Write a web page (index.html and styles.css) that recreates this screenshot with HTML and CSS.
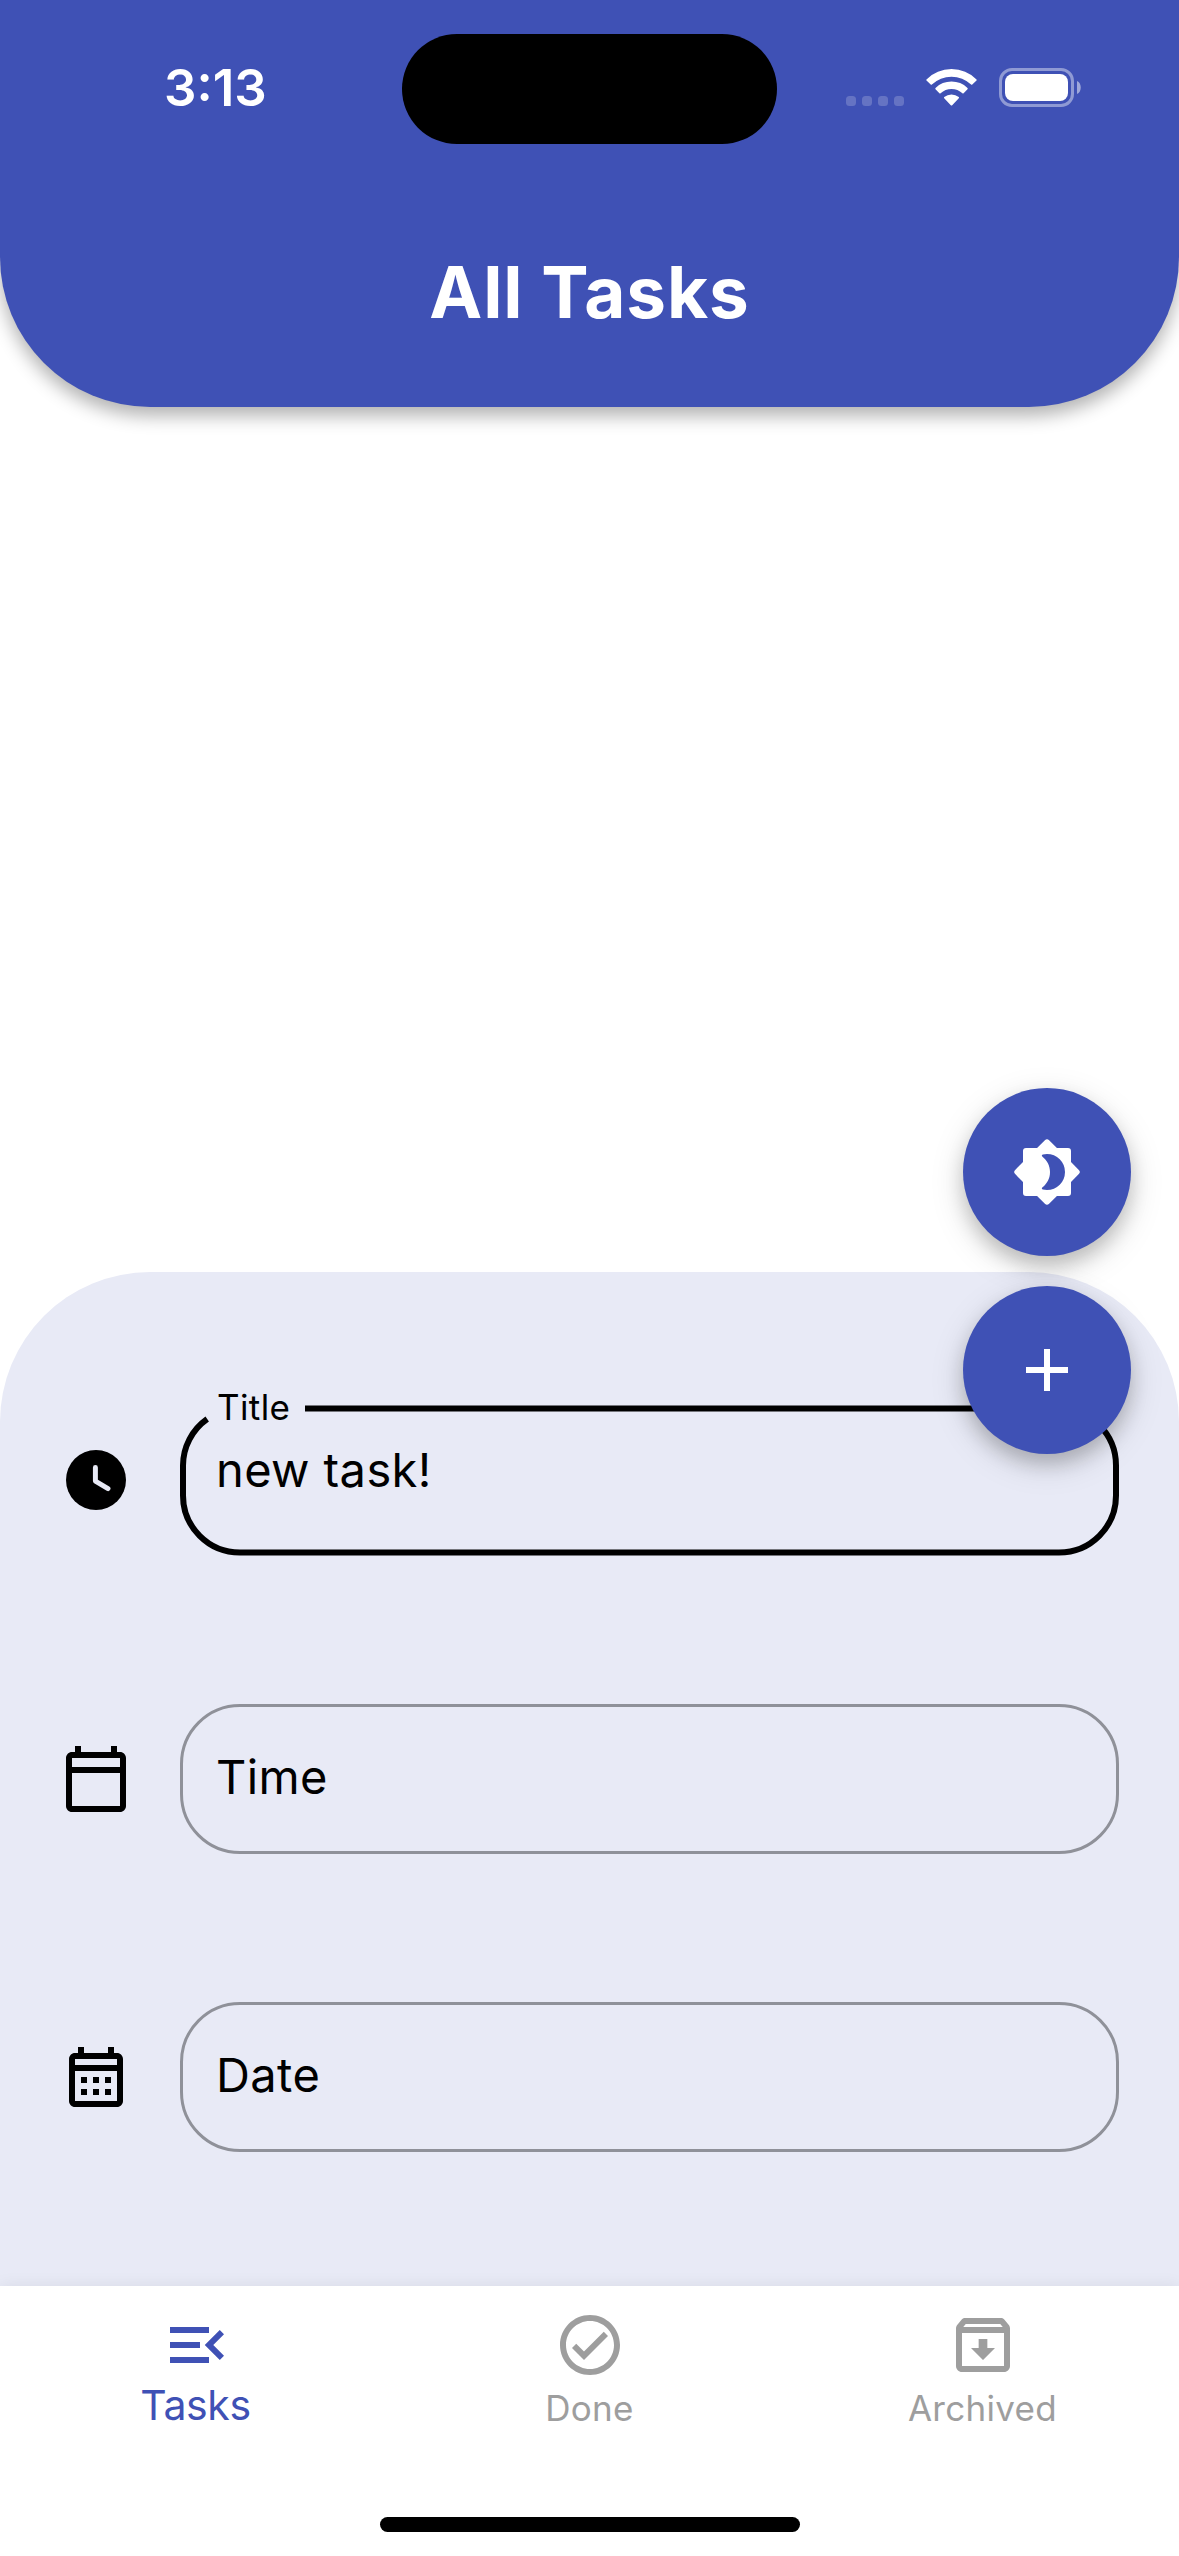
FILE: index.html
```html
<!DOCTYPE html>
<html lang="en">
<head>
<meta charset="utf-8">
<title>All Tasks</title>
<link rel="stylesheet" href="styles.css">
</head>
<body>
<div class="screen">
  <header class="app-header">
    <div class="status-bar">
      <span class="clock">3:13</span>
      <div class="island"></div>
      <div class="status-icons">
        <div class="signal"><i></i><i></i><i></i><i></i></div>
        <svg class="wifi" viewBox="0 0 51 37" fill="#fff">
          <path d="M25.500 0.000A36 36 0 0 1 50.500 10.400Q51 11 50.500 11.600L46.300 15.500Q45.700 16 45.100 15.500A28.400 28.400 0 0 0 5.900 15.500Q5.300 16 4.700 15.500L0.500 11.600Q0 11 0.500 10.400A36 36 0 0 1 25.500 0Z"/>
          <path d="M25.500 12.600A23.400 23.400 0 0 1 41.500 19Q42 19.600 41.500 20.200L37.600 24.200Q37 24.800 36.400 24.300A16 16 0 0 0 14.600 24.300Q14 24.800 13.400 24.200L9.500 20.200Q9 19.600 9.500 19A23.400 23.400 0 0 1 25.500 12.600Z"/>
          <path d="M25.500 25.400A11.500 11.500 0 0 1 32.800 28Q33.300 28.600 32.800 29.200L26.200 36.200Q25.500 36.900 24.800 36.200L18.200 29.200Q17.700 28.600 18.200 28A11.500 11.500 0 0 1 25.500 25.400Z"/>
        </svg>
        <svg class="battery" viewBox="0 0 83 39">
          <rect x="1.500" y="1.500" width="72" height="36" rx="11.500" fill="none" stroke="#fff" stroke-opacity=".42" stroke-width="3"/>
          <rect x="6" y="6" width="63" height="27" rx="8" fill="#fff"/>
          <path d="M78 13C83 15 83 24 78 26Z" fill="#fff" fill-opacity=".5"/>
        </svg>
      </div>
    </div>
    <h1 class="title">All Tasks</h1>
  </header>

  <main class="task-list"></main>

  <form class="sheet">
    <label class="row">
      <svg class="icon" viewBox="0 0 24 24"><circle cx="12" cy="12" r="10"/><path d="M11.800 7.850V12.350L16 14.850" fill="none" stroke="#e8eaf6" stroke-width="1.650" stroke-linecap="round" stroke-linejoin="round"/></svg>
      <span class="field active">
        <svg class="outline" viewBox="0 0 939 151"><path d="M125 3.500H879A57 57 0 0 1 936 60.500V90.500A57 57 0 0 1 879 147.500H60A57 57 0 0 1 3 90.500V60.500A57 57 0 0 1 27.200 14"/></svg>
        <span class="caption">Title</span>
        <span class="value">new task!</span>
      </span>
    </label>
    <label class="row">
      <svg class="icon" viewBox="0 0 24 24"><path d="M20 3h-1V1h-2v2H7V1H5v2H4c-1.100 0-2 .9-2 2v16c0 1.100.9 2 2 2h16c1.100 0 2-.9 2-2V5c0-1.100-.9-2-2-2zm0 18H4V10h16v11zm0-13H4V5h16v3z"/></svg>
      <span class="field"><span class="value">Time</span></span>
    </label>
    <label class="row">
      <svg class="icon" viewBox="0 0 24 24"><path d="M19 4h-1V2h-2v2H8V2H6v2H5c-1.110 0-1.990.9-1.990 2L3 20c0 1.100.89 2 2 2h14c1.100 0 2-.9 2-2V6c0-1.100-.9-2-2-2zm0 16H5V10h14v10zm0-12H5V6h14v2zM9 14H7v-2h2v2zm4 0h-2v-2h2v2zm4 0h-2v-2h2v2zm-8 4H7v-2h2v2zm4 0h-2v-2h2v2zm4 0h-2v-2h2v2z"/></svg>
      <span class="field"><span class="value">Date</span></span>
    </label>
  </form>

  <nav class="tabs">
    <div class="tab selected">
      <svg class="icon" viewBox="0 0 24 24"><path d="M3 18h13v-2H3v2zm0-5h10v-2H3v2zm0-7v2h13V6H3zm18 9.590L17.420 12 21 8.410 19.590 7l-5 5 5 5L21 15.590z"/></svg>
      <span>Tasks</span>
    </div>
    <div class="tab">
      <svg class="icon" viewBox="0 0 24 24"><path d="M16.590 7.580L10 14.170l-2.590-2.580L6 13l4 4 8-8zM12 2C6.480 2 2 6.480 2 12s4.480 10 10 10 10-4.480 10-10S17.520 2 12 2zm0 18c-4.420 0-8-3.580-8-8s3.580-8 8-8 8 3.580 8 8-3.580 8-8 8z"/></svg>
      <span>Done</span>
    </div>
    <div class="tab">
      <svg class="icon" viewBox="0 0 24 24"><path d="M20.540 5.230l-1.390-1.680C18.880 3.210 18.470 3 18 3H6c-.47 0-.88.21-1.160.55L3.460 5.230C3.170 5.570 3 6.020 3 6.500V19c0 1.100.9 2 2 2h14c1.100 0 2-.9 2-2V6.500c0-.48-.17-.93-.46-1.270zM6.240 5h11.520l.83 1H5.420l.82-1zM5 19V8h14v11H5zM10.550 10h2.900v3H16l-4 4-4-4h2.550z"/></svg>
      <span>Archived</span>
    </div>
    <div class="home-indicator"></div>
  </nav>

  <div class="fabs">
    <div class="fab">
      <svg class="icon" viewBox="0 0 24 24"><path fill-rule="evenodd" d="M20 8.690V5Q20 4 19 4H15.310L12.700 1.400Q12 .7 11.300 1.400L8.690 4H5Q4 4 4 5V8.690L1.400 11.300Q.7 12 1.400 12.700L4 15.310V19Q4 20 5 20H8.690L11.300 22.600Q12 23.300 12.700 22.600L15.310 20H19Q20 20 20 19V15.310L22.600 12.700Q23.300 12 22.600 11.300ZM12 18Q11.300 18 10.600 17.850Q10 17.600 10.500 17.100C12 15.900 13 14.200 13 12S12 8.100 10.500 6.900Q10 6.400 10.600 6.150Q11.300 6 12 6A6 6 0 0 1 12 18Z"/></svg>
    </div>
    <div class="fab">
      <svg class="icon" viewBox="0 0 24 24"><path d="M19 13h-6v6h-2v-6H5v-2h6V5h2v6h6v2z"/></svg>
    </div>
  </div>
</div>
</body>
</html>
```
FILE: styles.css
```css
* { box-sizing: border-box; }

body {
  margin: 0;
  background: #fff;
  color: #000;
  font-family: Inter, "Liberation Sans", sans-serif;
}

.screen {
  position: relative;
  display: flex;
  flex-direction: column;
  width: 1179px;
  height: 2556px;
  overflow: hidden;
}

.icon {
  display: block;
  flex: none;
  width: 72px;
  height: 72px;
  fill: currentColor;
}

/* Header */
.app-header {
  flex: none;
  height: 407px;
  padding-top: 34px;
  border-radius: 0 0 150px 150px;
  background: #3f51b5;
  box-shadow: 0 9px 18px rgba(0, 0, 0, .3);
  color: #fff;
}

.status-bar {
  display: grid;
  grid-template-columns: 402px 375px 1fr;
  height: 110px;
}

.clock {
  padding-left: 164px;
  font-size: 51px;
  font-weight: 600;
  line-height: 108px;
}

.island {
  border-radius: 55px;
  background: #000;
}

.status-icons {
  display: flex;
  align-items: flex-start;
  padding: 34px 0 0 69px;
}

.signal {
  display: flex;
  gap: 6px;
  margin-top: 28px;
}

.signal i {
  width: 10px;
  height: 10px;
  border-radius: 3.5px;
  background: rgba(255, 255, 255, .2);
}

.wifi {
  width: 51px;
  height: 37px;
  margin: 1px 0 0 22px;
}

.battery {
  width: 83px;
  height: 39px;
  margin-left: 22px;
}

.title {
  margin: 97px 0 0;
  font-size: 71px;
  font-weight: 700;
  line-height: 102px;
  letter-spacing: .9px;
  text-align: center;
}

.task-list { flex: 1; }

/* Bottom sheet */
.sheet {
  display: flex;
  flex: none;
  flex-direction: column;
  gap: 148px;
  height: 1014.5px;
  padding: 133.5px 60px 0;
  border-radius: 150px 150px 0 0;
  background: #e8eaf6;
}

.row {
  display: flex;
  align-items: center;
  gap: 48px;
  height: 150.5px;
}

.field {
  position: relative;
  flex: 1;
  height: 150px;
  padding-left: 33px;
  border: 3px solid #8f9199;
  border-radius: 60px;
  font-size: 47px;
  line-height: 140px;
  letter-spacing: .4px;
}

.field.active {
  height: 151px;
  padding-left: 36px;
  border: 0;
}

.active .value {
  display: block;
  line-height: 130px;
}

.outline {
  position: absolute;
  inset: 0;
  width: 939px;
  height: 151px;
  fill: none;
  stroke: #000;
  stroke-width: 6px;
}

.caption {
  position: absolute;
  top: -18px;
  left: 37px;
  font-size: 35px;
  line-height: 40px;
}

/* Tab bar */
.tabs {
  position: relative;
  display: grid;
  grid-template-columns: 393px 393px 393px;
  flex: none;
  height: 270px;
  padding-top: 23px;
  background: #fff;
  box-shadow: 0 0 16px rgba(0, 0, 0, .07);
  color: #9e9e9e;
}

.tab {
  display: flex;
  flex-direction: column;
  align-items: center;
  font-size: 35px;
  line-height: 56px;
  letter-spacing: .3px;
}

.tab span { margin-top: -1px; }

.selected {
  color: #3f51b5;
  font-size: 41px;
  letter-spacing: -.4px;
}

.selected span { margin: -4px 2px 0 0; }

.home-indicator {
  position: absolute;
  bottom: 24px;
  left: 380px;
  width: 420px;
  height: 15px;
  border-radius: 8px;
  background: #000;
}

/* Floating buttons */
.fabs {
  position: absolute;
  top: 1088px;
  right: 48px;
  display: flex;
  flex-direction: column;
  gap: 30px;
}

.fab {
  display: flex;
  align-items: center;
  justify-content: center;
  width: 168px;
  height: 168px;
  border-radius: 50%;
  background: #3f51b5;
  box-shadow: 0 10px 18px rgba(0, 0, 0, .17), 0 10px 34px rgba(0, 0, 0, .15);
  color: #fff;
}
```
